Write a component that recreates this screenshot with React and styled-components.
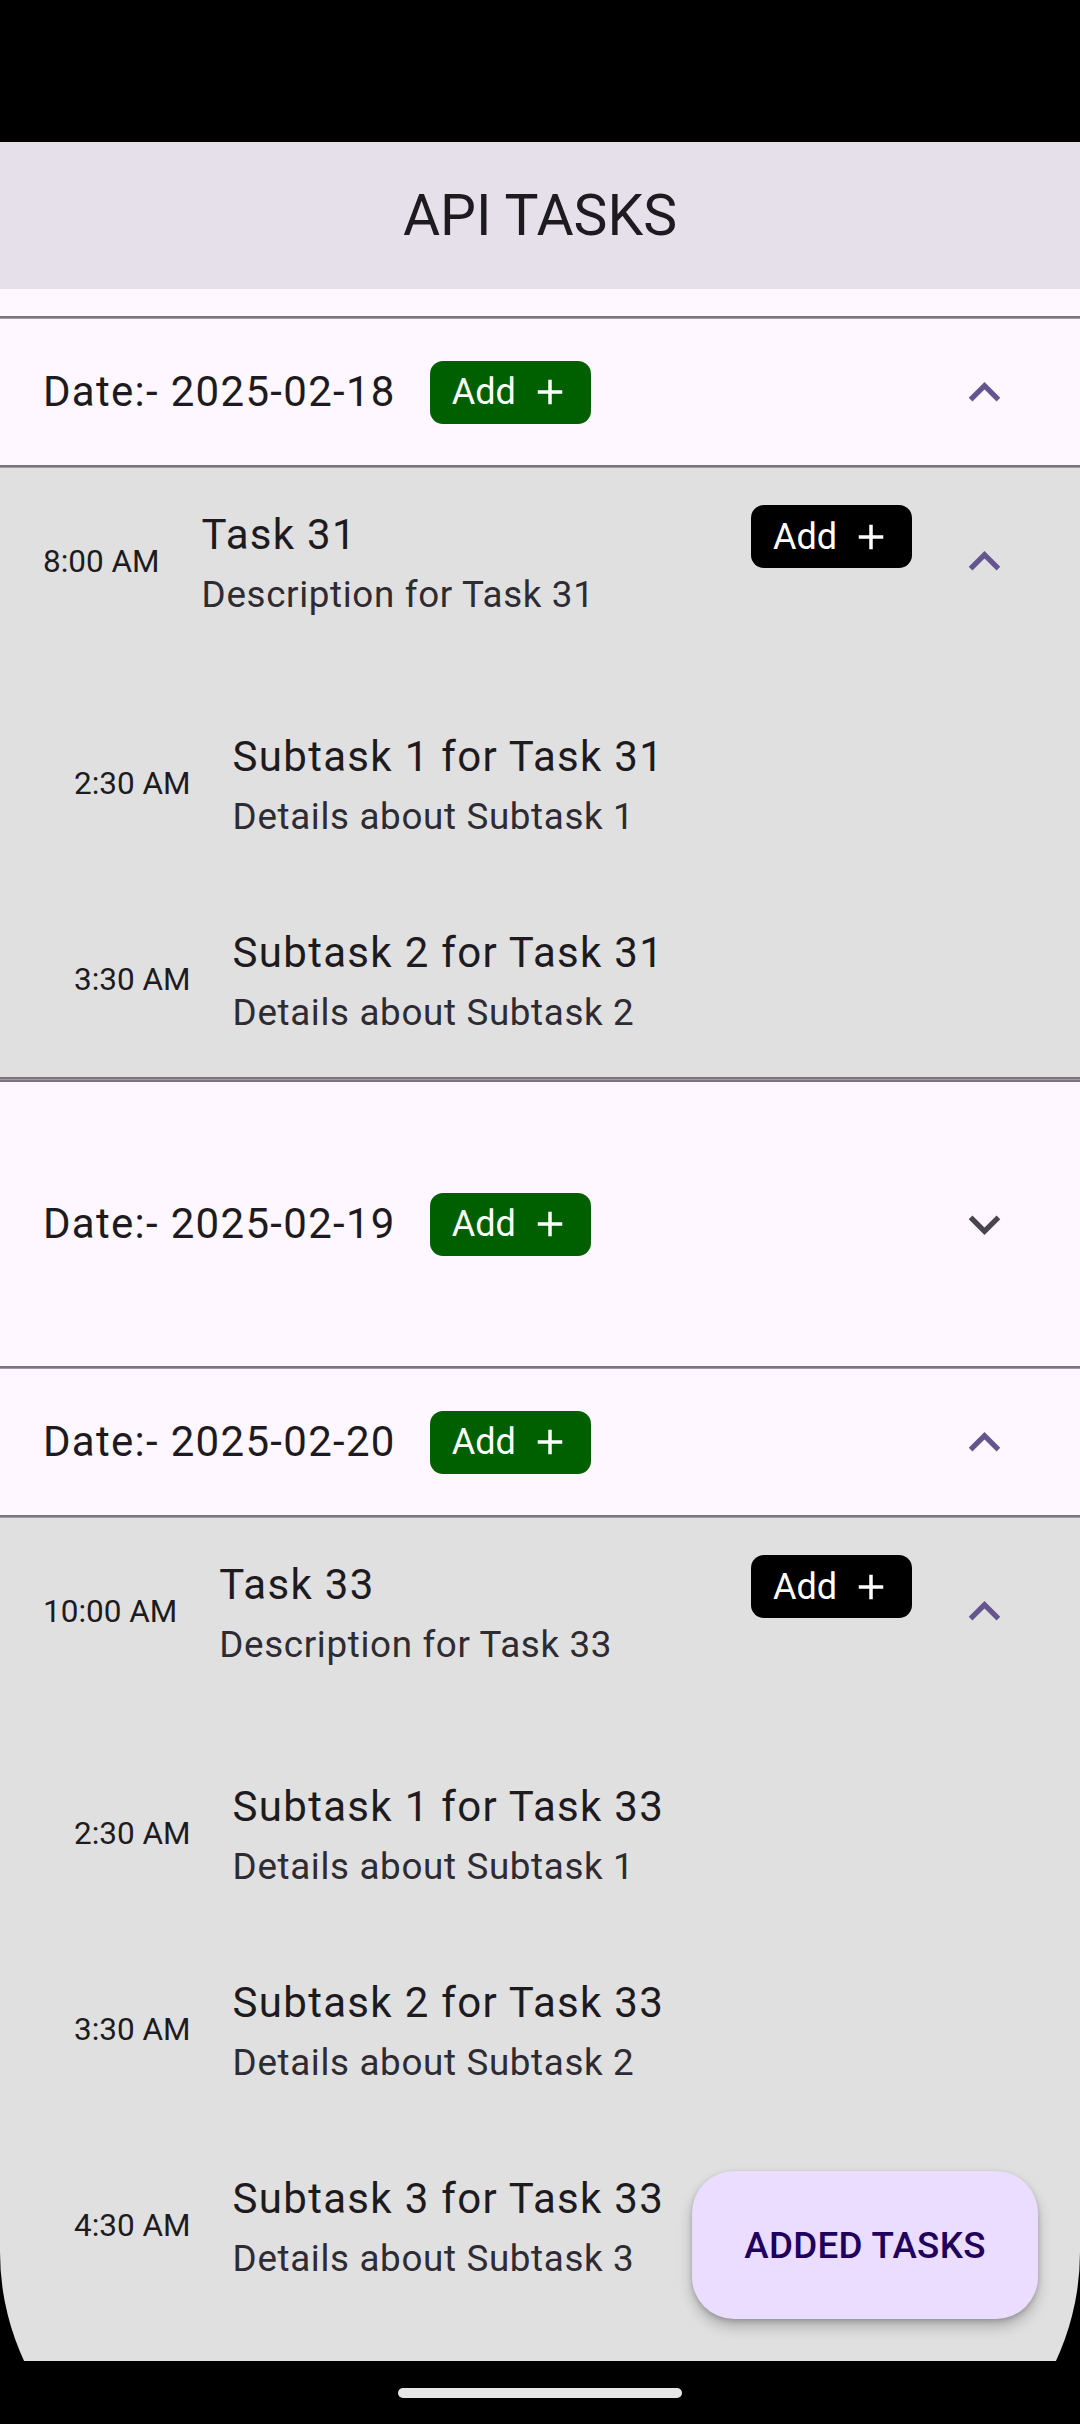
import React from 'react'
import styled, { createGlobalStyle } from 'styled-components'

const GlobalStyle = createGlobalStyle`
  html, body {
    margin: 0;
    padding: 0;
    background: #000;
  }
  body {
    font-family: Roboto, "Noto Sans", "Liberation Sans", sans-serif;
    color: #1d1b20;
  }
`

const Phone = styled.div`
  width: 1080px;
  height: 2424px;
  display: flex;
  flex-direction: column;
  background: #000;
  overflow: hidden;
`

const StatusBar = styled.div`
  height: 142px;
  flex-shrink: 0;
  background: #000;
`

const Viewport = styled.div`
  position: relative;
  height: 2219px;
  flex-shrink: 0;
  overflow: hidden;
`

// the display's rounded corners run past the nav bar, so the screen is taller than its window
const Display = styled.div`
  height: 2369px;
  display: flex;
  flex-direction: column;
  background: #e0e0e0;
  border-radius: 0 0 259px 259px;
  overflow: hidden;
`

const AppBar = styled.header`
  height: 147px;
  flex-shrink: 0;
  display: flex;
  align-items: center;
  justify-content: center;
  background: #e5e0ea;
  font-size: 57px;
  color: #1d1b20;
`

const TopGap = styled.div`
  height: 27px;
  background: #fef7ff;
`

const Rule = styled.div`
  height: ${p => (p.$thin ? 2 : 3)}px;
  box-sizing: border-box;
  border-top: 2px solid #79747e;
  ${p => (p.$thin ? '' : 'border-bottom: 1px solid #a19ca6;')}
`

const DateHeader = styled.div`
  height: ${p => (p.$tall ? 284 : 146)}px;
  display: flex;
  align-items: center;
  padding: 0 64px 0 43px;
  background: #fef7ff;
`

const DateText = styled.span`
  font-size: 42px;
  letter-spacing: 1.3px;
  color: #1d1b20;
  margin-top: -2px;
`

const AddButton = styled.button`
  width: 161px;
  height: 63px;
  flex-shrink: 0;
  display: flex;
  align-items: center;
  justify-content: center;
  gap: 13px;
  padding: 0 0 0 2px;
  border: none;
  border-radius: 13px;
  background: ${p => (p.$dark ? '#000' : '#006000')};
  color: #fff;
  font-family: inherit;
  font-size: 36px;
  margin-left: ${p => (p.$dark ? 0 : 34)}px;
  ${p => (p.$dark ? 'align-self: flex-start; margin-top: 37px;' : '')}
`

const Chevron = styled.svg`
  width: 63px;
  height: 63px;
  flex-shrink: 0;
  margin-left: ${p => (p.$gap ? `${p.$gap}px` : 'auto')};
  fill: ${p => (p.$open ? '#65558f' : '#49454f')};
`

const TaskHeader = styled.div`
  height: 186px;
  display: flex;
  align-items: center;
  padding: 0 64px 0 43px;
`

const Time = styled.span`
  font-size: 31.5px;
  color: #1d1b20;
  flex-shrink: 0;
`

const TextCol = styled.div`
  flex: 1;
  display: flex;
  flex-direction: column;
  margin-left: 42px;
  padding-top: 3px;
`

const Title = styled.div`
  font-size: 42px;
  line-height: 63px;
  letter-spacing: 1.3px;
  color: #1d1b20;
`

const Subtitle = styled.div`
  margin-top: 3px;
  font-size: 36.75px;
  line-height: 52.5px;
  letter-spacing: 0.66px;
  color: #2e2b33;
`

const SubList = styled.div`
  padding-top: 31px;
`

const SubRow = styled.div`
  height: 196px;
  display: flex;
  align-items: center;
  padding-left: 74px;
`

const Fab = styled.button`
  position: absolute;
  right: 42px;
  bottom: 42px;
  width: 346px;
  height: 148px;
  border: none;
  border-radius: 42px;
  background: #eaddff;
  color: #21005d;
  font-family: inherit;
  font-size: 36.75px;
  font-weight: 500;
  letter-spacing: 0.3px;
  box-shadow: 0 8px 14px rgba(0, 0, 0, 0.22), 0 2px 5px rgba(0, 0, 0, 0.18);
`

const NavBar = styled.div`
  height: 63px;
  flex-shrink: 0;
  display: flex;
  align-items: center;
  justify-content: center;
  background: #000;
`

const Handle = styled.div`
  width: 284px;
  height: 10px;
  border-radius: 5px;
  background: #e6e6e6;
`

const PlusIcon = () => (
  <svg width="42" height="42" viewBox="0 0 24 24" fill="#fff">
    <path d="M19 13h-6v6h-2v-6H5v-2h6V5h2v6h6v2z" />
  </svg>
)

const Toggle = ({ open, gap }) => (
  <Chevron viewBox="0 0 24 24" $open={open} $gap={gap}>
    {open
      ? <path d="M12 8l-6 6 1.41 1.41L12 10.83l4.59 4.58L18 14z" />
      : <path d="M16.59 8.59L12 13.17 7.41 8.59 6 10l6 6 6-6z" />}
  </Chevron>
)

const days = [
  {
    date: '2025-02-18',
    open: true,
    task: {
      time: '8:00 AM', title: 'Task 31', desc: 'Description for Task 31',
      subs: [
        { time: '2:30 AM', title: 'Subtask 1 for Task 31', desc: 'Details about Subtask 1' },
        { time: '3:30 AM', title: 'Subtask 2 for Task 31', desc: 'Details about Subtask 2' },
      ],
    },
  },
  { date: '2025-02-19', open: false },
  {
    date: '2025-02-20',
    open: true,
    cut: true,
    task: {
      time: '10:00 AM', title: 'Task 33', desc: 'Description for Task 33',
      subs: [
        { time: '2:30 AM', title: 'Subtask 1 for Task 33', desc: 'Details about Subtask 1' },
        { time: '3:30 AM', title: 'Subtask 2 for Task 33', desc: 'Details about Subtask 2' },
        { time: '4:30 AM', title: 'Subtask 3 for Task 33', desc: 'Details about Subtask 3' },
      ],
    },
  },
]

const DayGroup = ({ day }) => {
  const { date, open, task, cut } = day
  if (!open) {
    return (
      <DateHeader $tall>
        <DateText>Date:- {date}</DateText>
        <AddButton>Add <PlusIcon /></AddButton>
        <Toggle open={false} />
      </DateHeader>
    )
  }
  return (
    <>
      <Rule />
      <DateHeader>
        <DateText>Date:- {date}</DateText>
        <AddButton>Add <PlusIcon /></AddButton>
        <Toggle open />
      </DateHeader>
      <Rule />
      <TaskHeader>
        <Time>{task.time}</Time>
        <TextCol>
          <Title>{task.title}</Title>
          <Subtitle>{task.desc}</Subtitle>
        </TextCol>
        <AddButton $dark>Add <PlusIcon /></AddButton>
        <Toggle open gap={41} />
      </TaskHeader>
      <SubList>
        {task.subs.map(s => (
          <SubRow key={s.title}>
            <Time>{s.time}</Time>
            <TextCol>
              <Title>{s.title}</Title>
              <Subtitle>{s.desc}</Subtitle>
            </TextCol>
          </SubRow>
        ))}
      </SubList>
      {!cut && <Rule />}
      {!cut && <Rule $thin />}
    </>
  )
}

export default function App() {
  return (
    <Phone>
      <GlobalStyle />
      <StatusBar />
      <Viewport>
        <Display>
          <AppBar>API TASKS</AppBar>
          <TopGap />
          {days.map(d => <DayGroup key={d.date} day={d} />)}
        </Display>
        <Fab>ADDED TASKS</Fab>
      </Viewport>
      <NavBar>
        <Handle />
      </NavBar>
    </Phone>
  )
}
